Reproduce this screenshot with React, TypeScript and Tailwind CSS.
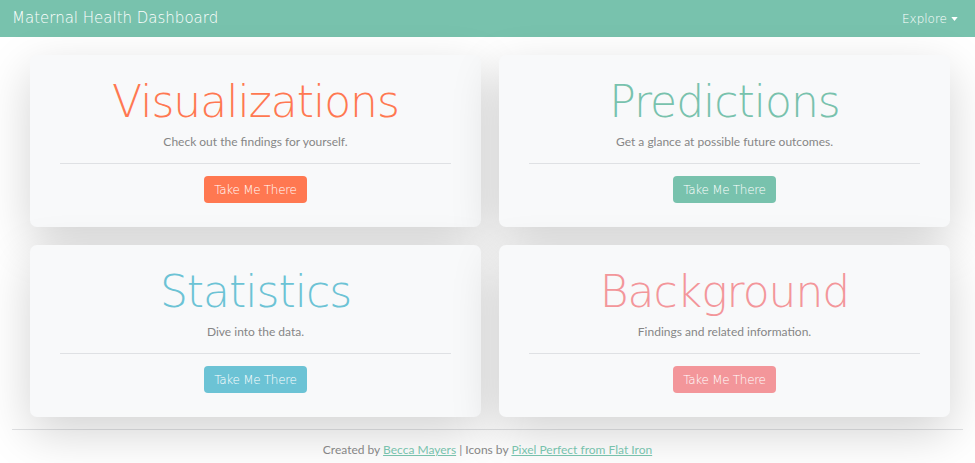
import React from "react";

const head = { fontFamily: '"DejaVu Sans", sans-serif' };
const body = { fontFamily: 'Lato, "Open Sans", sans-serif' };

type CardProps = { title: string; text: string; color: string; btn: string };

function Card({ title, text, color, btn }: CardProps) {
  return (
    <div className="flex flex-col items-center rounded-[7px] bg-[#f8f9fa] px-[30px] pt-[18px] pb-[24px] shadow-[0_16px_48px_rgba(0,0,0,0.175)]">
      <h1 className={`text-[44px] leading-[58px] font-extralight tracking-[-1px] ${color}`} style={head}>
        {title}
      </h1>
      <p className="mt-[1px] text-[12px] leading-[20px] text-[#868686]" style={body}>
        {text}
      </p>
      <div className="mt-[11px] h-px w-full bg-[#dfe1e4]" />
      <button
        className={`mt-[12px] h-[27px] rounded-[4px] px-[10px] text-[12px] font-light tracking-[-0.3px] text-white ${btn}`}
        style={head}
      >
        Take Me There
      </button>
    </div>
  );
}

export default function App() {
  return (
    <div className="min-h-[463px] bg-white">
      <nav className="flex h-[37px] items-center justify-between bg-[#78c2ad] pl-[12px] pr-[17px] text-white">
        <span className="text-[15px] font-extralight" style={head}>
          Maternal Health Dashboard
        </span>
        <span className="flex items-center gap-[4px] text-[12px] font-extralight" style={head}>
          Explore
          <svg width="7" height="4" viewBox="0 0 8 5">
            <path d="M0 0h8L4 5z" fill="white" />
          </svg>
        </span>
      </nav>
      <div className="grid grid-cols-2 gap-[18px] pl-[30px] pr-[25px] pt-[18px]">
        <Card title="Visualizations" text="Check out the findings for yourself." color="text-[#ff7851]" btn="bg-[#ff7851]" />
        <Card title="Predictions" text="Get a glance at possible future outcomes." color="text-[#78c2ad]" btn="bg-[#78c2ad]" />
        <Card title="Statistics" text="Dive into the data." color="text-[#6cc3d5]" btn="bg-[#6cc3d5]" />
        <Card title="Background" text="Findings and related information." color="text-[#f3969a]" btn="bg-[#f3969a]" />
      </div>
      <div className="mx-[12px] mt-[12px] h-px bg-[#e2e3e5]" />
      <footer className="pt-[11px] text-center text-[12px] leading-[18px] text-[#868686]" style={body}>
        Created by{" "}
        <a href="#" className="text-[#78c2ad] underline">
          Becca Mayers
        </a>{" "}
        | Icons by{" "}
        <a href="#" className="text-[#78c2ad] underline">
          Pixel Perfect from Flat Iron
        </a>
      </footer>
    </div>
  );
}
